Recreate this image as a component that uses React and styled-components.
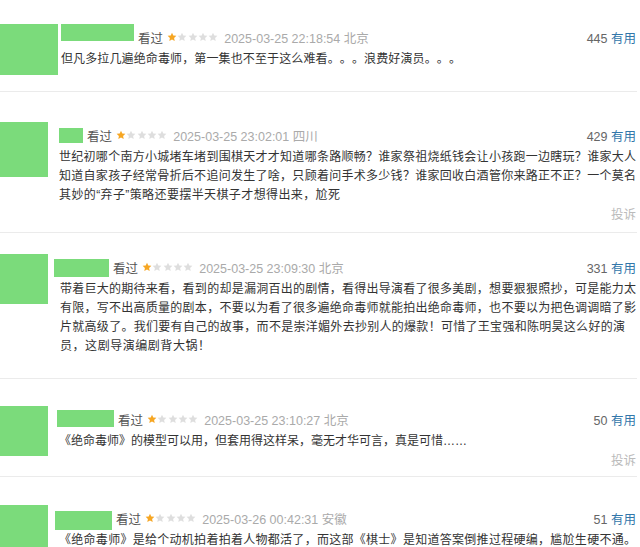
import React from 'react';
import styled, { createGlobalStyle } from 'styled-components';

const GlobalStyle = createGlobalStyle`
  html, body {
    margin: 0;
    padding: 0;
    background: #fff;
  }
  body {
    font-family: "Liberation Sans", "Noto Sans CJK SC", sans-serif;
    text-spacing-trim: space-all;
  }
`;

const Page = styled.div`
  width: 640px;
  height: 547px;
  overflow: hidden;
  padding-top: 24px;
  box-sizing: border-box;
`;

const Item = styled.div`
  display: flex;
  align-items: flex-start;
  width: 637px;
  box-sizing: border-box;
  padding: ${p => p.$pt}px 1px ${p => p.$pb}px 0;
  border-bottom: 1px solid #ebebeb;
`;

const Avatar = styled.div`
  flex: none;
  width: ${p => p.$w}px;
  height: ${p => p.$h}px;
  background: #7bdb7b;
`;

const Body = styled.div`
  flex: 1;
  min-width: 0;
  margin-left: ${p => p.$ml}px;
`;

const Header = styled.div`
  display: flex;
  align-items: center;
  height: 26px;
  font-size: 12.5px;
  white-space: nowrap;
`;

const NameBar = styled.div`
  flex: none;
  align-self: flex-start;
  width: ${p => p.$w}px;
  height: ${p => p.$h}px;
  margin-top: ${p => p.$mt}px;
  margin-left: ${p => p.$off}px;
  margin-right: 4px;
  background: #7bdb7b;
`;

const Watched = styled.span`
  color: #555;
  margin-right: 4px;
`;

const Stars = styled.span`
  display: inline-flex;
  gap: 0.3px;
  margin-right: 6px;
`;

const Meta = styled.span`
  color: #aaa;
`;

const Votes = styled.span`
  margin-left: auto;
  color: #666;
`;

const Useful = styled.span`
  color: #3377aa;
`;

const Content = styled.div`
  color: #333;
  font-size: 12px;
  line-height: 19px;
`;

const Line = styled.div`
  white-space: nowrap;
  width: ${p => (p.$w === 'auto' ? 'auto' : p.$w ? `${p.$w}px` : '100%')};
  text-align: justify;
  text-align-last: ${p => (p.$w === 'auto' ? 'left' : 'justify')};
  text-justify: inter-character;
`;

const Report = styled.div`
  height: 20px;
  line-height: 20px;
  text-align: right;
  font-size: 12.5px;
  color: #bbb;
`;

const Star = ({ on }) => (
  <svg width="10" height="10" viewBox="0 0 24 24">
    <polygon
      points="12,1.5 15.1,8.3 22.5,9.1 17,14.1 18.5,21.5 12,17.8 5.5,21.5 7,14.1 1.5,9.1 8.9,8.3"
      fill={on ? '#f6a623' : '#dedede'}
    />
  </svg>
);

// w: null = full line, number = width the line spans, 'auto' = natural
const comments = [
  {
    pt: 0, pb: 16, avatar: [58, 51], ml: 3,
    bar: { w: 73, h: 17, mt: 0, off: 0 },
    time: '2025-03-25 22:18:54', place: '北京', votes: 445,
    lines: [{ t: '但凡多拉几遍绝命毒师，第一集也不至于这么难看。。。浪费好演员。。。', w: 400 }],
    report: false,
  },
  {
    pt: 30, pb: 7, avatar: [48, 55], ml: 11,
    bar: { w: 24, h: 15, mt: 6, off: 0 },
    time: '2025-03-25 23:02:01', place: '四川', votes: 429,
    lines: [
      { t: '世纪初哪个南方小城堵车堵到围棋天才才知道哪条路顺畅？谁家祭祖烧纸钱会让小孩跑一边瞎玩？谁家大人' },
      { t: '知道自家孩子经常骨折后不追问发生了啥，只顾着问手术多少钱？谁家回收白酒管你来路正不正？一个莫名' },
      { t: '其妙的“弃子”策略还要摆半天棋子才想得出来，尬死', w: 281 },
    ],
    report: true,
  },
  {
    pt: 21, pb: 22, avatar: [48, 50], ml: 12,
    bar: { w: 55, h: 18, mt: 5, off: -6 },
    time: '2025-03-25 23:09:30', place: '北京', votes: 331,
    lines: [
      { t: '带着巨大的期待来看，看到的却是漏洞百出的剧情，看得出导演看了很多美剧，想要狠狠照抄，可是能力太' },
      { t: '有限，写不出高质量的剧本，不要以为看了很多遍绝命毒师就能拍出绝命毒师，也不要以为把色调调暗了影' },
      { t: '片就高级了。我们要有自己的故事，而不是崇洋媚外去抄别人的爆款！可惜了王宝强和陈明昊这么好的演', w: 565 },
      { t: '员，这剧导演编剧背大锅！', w: 150 },
    ],
    report: false,
  },
  {
    pt: 27, pb: 5, avatar: [48, 50], ml: 11,
    bar: { w: 57, h: 17, mt: 4, off: -2 },
    time: '2025-03-25 23:10:27', place: '北京', votes: 50,
    lines: [{ t: '《绝命毒师》的模型可以用，但套用得这样呆，毫无才华可言，真是可惜……', w: 'auto' }],
    report: true,
  },
  {
    pt: 28, pb: 10, avatar: [48, 50], ml: 11,
    bar: { w: 57, h: 19, mt: 6, off: -4 },
    time: '2025-03-26 00:42:31', place: '安徽', votes: 51,
    lines: [{ t: '《绝命毒师》是给个动机拍着拍着人物都活了，而这部《棋士》是知道答案倒推过程硬编，尴尬生硬不通。' }],
    report: false,
  },
];

export default function App() {
  return (
    <Page lang="zh-CN">
      <GlobalStyle />
      {comments.map((c, i) => (
        <Item key={i} $pt={c.pt} $pb={c.pb}>
          <Avatar $w={c.avatar[0]} $h={c.avatar[1]} />
          <Body $ml={c.ml}>
            <Header>
              <NameBar $w={c.bar.w} $h={c.bar.h} $mt={c.bar.mt} $off={c.bar.off} />
              <Watched>看过</Watched>
              <Stars>
                {[0, 1, 2, 3, 4].map(s => <Star key={s} on={s === 0} />)}
              </Stars>
              <Meta>{c.time} {c.place}</Meta>
              <Votes>{c.votes} <Useful>有用</Useful></Votes>
            </Header>
            <Content>
              {c.lines.map((l, j) => <Line key={j} $w={l.w}>{l.t}</Line>)}
            </Content>
            {c.report && <Report>投诉</Report>}
          </Body>
        </Item>
      ))}
    </Page>
  );
}
